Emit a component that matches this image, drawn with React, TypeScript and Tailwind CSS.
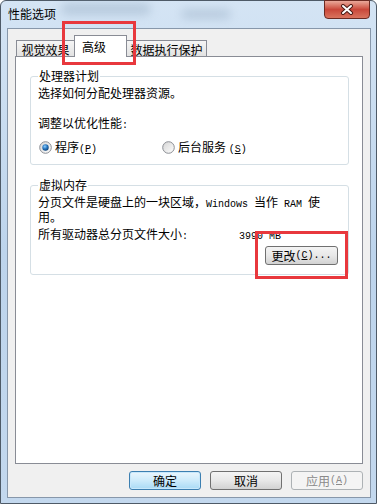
import React from "react";

// Latin text inside the Chinese UI is drawn in a 6px-wide monospace, like SimSun
const Mono: React.FC<{ children: React.ReactNode }> = ({ children }) => (
  <span className="font-['Liberation_Mono',monospace] text-[10px] leading-[10px]">{children}</span>
);

const Key: React.FC<{ k: string }> = ({ k }) => (
  <Mono>
    (<span className="underline underline-offset-1">{k}</span>)
  </Mono>
);

const Radio: React.FC<{ checked?: boolean }> = ({ checked }) => (
  <svg width="13" height="13" viewBox="0 0 13 13" className="shrink-0">
    <defs>
      <linearGradient id={checked ? "rbg1" : "rbg0"} x1="0" y1="0" x2="1" y2="1">
        <stop offset="0" stopColor="#d4d4d4" />
        <stop offset="1" stopColor="#ffffff" />
      </linearGradient>
      <radialGradient id="rdot" cx="0.4" cy="0.35" r="0.7">
        <stop offset="0" stopColor="#8ed0ff" />
        <stop offset="0.5" stopColor="#2a78c2" />
        <stop offset="1" stopColor="#0b3f73" />
      </radialGradient>
    </defs>
    <circle cx="6.5" cy="6.5" r="5.8" fill={checked ? "url(#rbg1)" : "url(#rbg0)"} stroke="#8b8e94" strokeWidth="1" />
    {checked && <circle cx="6.5" cy="6.5" r="3.2" fill="url(#rdot)" />}
  </svg>
);

export default function App() {
  return (
    <div className="relative h-[504px] w-[377px] overflow-hidden font-['Noto_Sans_CJK_SC',sans-serif] text-[12px] text-black">
      {/* window frame */}
      <div className="flex h-full flex-col rounded-t-[6px] border border-[#4e5a67] bg-gradient-to-b from-[#d4e4f4] via-[#bdd4ec] to-[#c3d8ee]">
        {/* title bar */}
        <div className="relative flex h-[27px] items-start">
          <div className="absolute left-[60px] top-[2px] h-[12px] w-[90px] rounded-full bg-[#8fa6bd] opacity-40 blur-[5px]" />
          <div className="absolute left-[180px] top-[8px] h-[10px] w-[50px] rounded-full bg-[#7d95ad] opacity-30 blur-[5px]" />
          <span className="relative ml-[7px] mt-[5px] leading-[16px]">性能选项</span>
          <div className="flex-1" />
          <div className="relative mr-[6px] -mt-px flex h-[19px] w-[46px] items-center justify-center rounded-b-[4px] border border-[#6b2a22] bg-gradient-to-b from-[#e9a89a] via-[#c9473a] to-[#d9735e]">
            <svg width="14" height="11" viewBox="0 0 14 11">
              <path d="M3 2 L11 9 M11 2 L3 9" stroke="#4a1a14" strokeWidth="4" strokeLinecap="round" />
              <path d="M3 2 L11 9 M11 2 L3 9" stroke="#ffffff" strokeWidth="2" strokeLinecap="round" />
            </svg>
          </div>
        </div>

        {/* dialog body */}
        <div className="mb-[5px] ml-[6px] mr-[5px] flex flex-1 flex-col border border-[#8797aa] bg-[#f0f0f0] px-[7px] pt-[6px]">
          {/* tabs */}
          <div className="flex h-[21px] items-end pl-[1px]">
            <div className="flex h-[16px] w-[59px] items-center justify-center border border-b-0 border-[#898c95] bg-gradient-to-b from-[#f5f5f5] to-[#e2e2e2] pt-[3px] leading-[14px]">
              视觉效果
            </div>
            <div className="relative z-10 -mb-px -ml-px h-[22px] w-[53px] border border-b-0 border-[#898c95] bg-white pl-[7px] pt-[4px] leading-[14px]">
              高级
            </div>
            <div className="-ml-px flex h-[16px] w-[81px] items-center justify-center border border-b-0 border-[#898c95] bg-gradient-to-b from-[#f5f5f5] to-[#e2e2e2] pt-[3px] leading-[14px]">
              数据执行保护
            </div>
          </div>

          {/* tab page */}
          <div className="flex flex-1 flex-col border border-[#898c95] bg-white">
            <fieldset className="ml-[14px] mr-[13px] mt-[12px] rounded-[3px] border border-[#d5dfe5] px-[7px] pb-[9px] leading-[14px]">
              <legend className="px-px leading-[14px]">处理器计划</legend>
              <p className="pt-[3px]">选择如何分配处理器资源。</p>
              <p className="mt-[16px]">
                调整以优化性能<Mono>:</Mono>
              </p>
              <div className="mt-[9px] flex items-center">
                <div className="ml-px flex w-[123px] items-center gap-[3px]">
                  <Radio checked />
                  <span>
                    程序<Key k="P" />
                  </span>
                </div>
                <div className="flex items-center gap-[3px]">
                  <Radio />
                  <span>
                    后台服务 <Key k="S" />
                  </span>
                </div>
              </div>
            </fieldset>

            <fieldset className="ml-[14px] mr-[13px] mt-[13px] rounded-[3px] border border-[#d5dfe5] px-[7px] pb-[9px] leading-[14px]">
              <legend className="px-px leading-[14px]">虚拟内存</legend>
              <p className="pt-[3px]">
                分页文件是硬盘上的一块区域，<Mono>Windows </Mono>当作<Mono> RAM </Mono>使
                <br />
                用。
              </p>
              <div className="mt-[3px] flex">
                <span className="w-[201px]">
                  所有驱动器总分页文件大小<Mono>:</Mono>
                </span>
                <span>
                  <Mono>3990 MB</Mono>
                </span>
              </div>
              <div className="mt-[4px] flex justify-end pr-[3px]">
                <div className="flex h-[19px] w-[73px] items-center justify-center rounded-[3px] border border-[#707070] bg-gradient-to-b from-[#f4f4f4] via-[#e8e8e8] to-[#d2d2d2] leading-[14px]">
                  更改<Key k="C" />
                  <Mono>...</Mono>
                </div>
              </div>
            </fieldset>
          </div>

          {/* dialog buttons */}
          <div className="my-[7px] flex h-[19px] justify-end gap-[9px]">
            <div className="flex w-[72px] items-center justify-center rounded-[3px] border border-[#3c7fb1] bg-gradient-to-b from-[#eaf6fd] via-[#cdebfb] to-[#a9daf5] leading-[14px] shadow-[inset_0_0_0_1px_#c8e8fb]">
              确定
            </div>
            <div className="flex w-[72px] items-center justify-center rounded-[3px] border border-[#707070] bg-gradient-to-b from-[#f4f4f4] via-[#e8e8e8] to-[#d2d2d2] leading-[14px]">
              取消
            </div>
            <div className="flex w-[72px] items-center justify-center rounded-[3px] border border-[#adb2b5] bg-[#f4f4f4] leading-[14px] text-[#8a8a8a]">
              应用<Key k="A" />
            </div>
          </div>
        </div>
      </div>

      {/* red highlight boxes drawn over the screenshot */}
      <div className="absolute left-[62px] top-[21px] h-[44px] w-[74px] border-[3px] border-[#e8383d]" />
      <div className="absolute left-[255px] top-[231px] h-[48px] w-[93px] border-[3px] border-[#e8383d]" />
    </div>
  );
}
